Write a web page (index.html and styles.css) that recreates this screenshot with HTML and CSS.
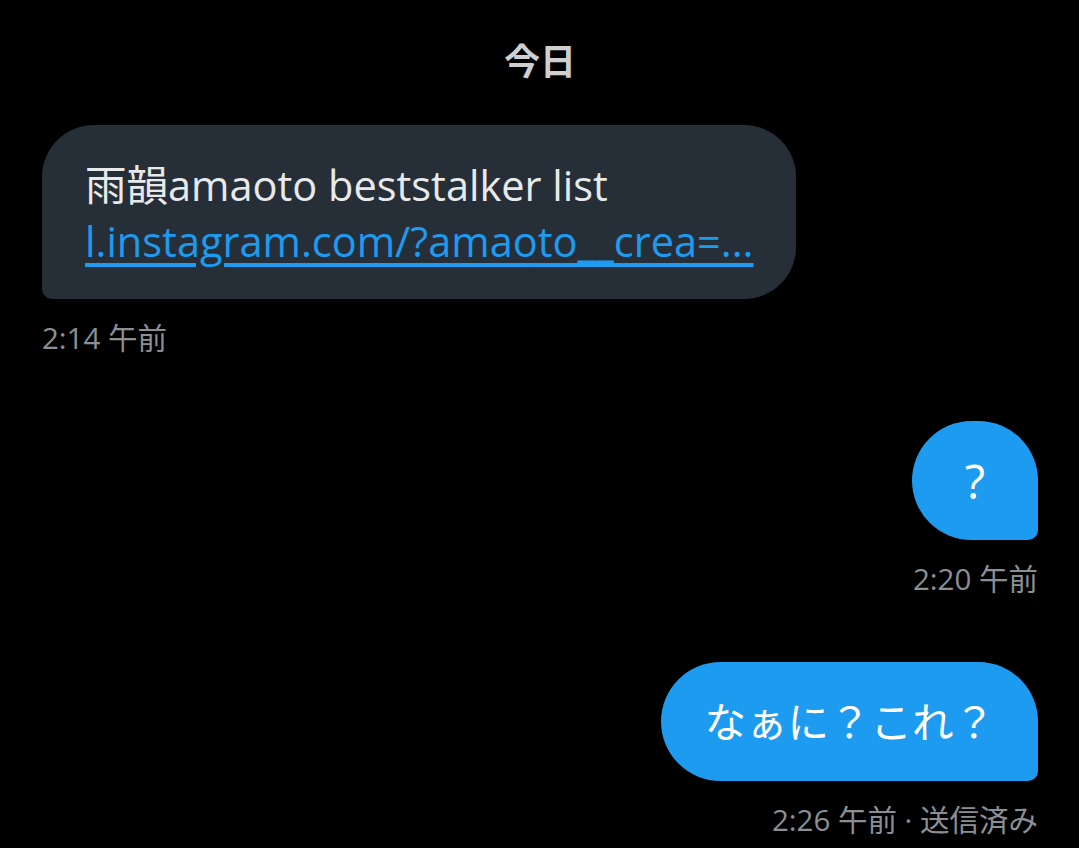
FILE: index.html
```html
<!DOCTYPE html>
<html lang="ja">
<head>
<meta charset="utf-8">
<link rel="stylesheet" href="styles.css">
</head>
<body>
<div class="chat">
  <div class="day">今日</div>

  <div class="msg in">
    <div class="bubble recv">雨韻amaoto beststalker list<br><a class="link" href="#">l.instagram.com/?amaoto__crea=...</a></div>
    <div class="time">2:14 午前</div>
  </div>

  <div class="msg out first">
    <div class="bubble sent q">?</div>
    <div class="time">2:20 午前</div>
  </div>

  <div class="msg out">
    <div class="bubble sent">なぁに？これ？</div>
    <div class="time">2:26 午前 · 送信済み</div>
  </div>
</div>
</body>
</html>
```
FILE: styles.css
```css
html, body {
  margin: 0;
  padding: 0;
  background: #000;
}
body {
  font-family: "Open Sans", "Noto Sans CJK JP", sans-serif;
  width: 1079px;
  height: 848px;
  overflow: hidden;
}
.chat {
  display: flex;
  flex-direction: column;
  padding: 0 41px 0 42px;
}
.day {
  text-align: center;
  color: #cfcfcf;
  font-weight: 700;
  font-size: 36px;
  line-height: 40px;
  margin-top: 42px;
  margin-bottom: 43px;
}
.msg {
  display: flex;
  flex-direction: column;
}
.msg.in { align-items: flex-start; }
.msg.out { align-items: flex-end; }
.msg.first { margin-top: 66px; }
.msg.out + .msg.out { margin-top: 66px; }
.bubble {
  font-size: 41.5px;
  line-height: 56px;
  padding: 32px 43px 30px;
}
.recv {
  background: #262f37;
  color: #e7e9ea;
  border-radius: 52px 52px 52px 10px;
}
.link {
  color: #1d9bf0;
  text-decoration: underline;
  text-underline-offset: 6px;
}
.sent {
  background: #1d9bf0;
  color: #fff;
  border-radius: 60px 60px 10px 60px;
  padding-top: 32px;
  padding-bottom: 31px;
}
.sent.q {
  font-size: 47px;
  padding-left: 44px;
  padding-right: 44px;
  min-width: 38px;
  text-align: center;
}
.time {
  color: #8b8f93;
  font-size: 29.5px;
  line-height: 34px;
  margin-top: 22px;
}
```
